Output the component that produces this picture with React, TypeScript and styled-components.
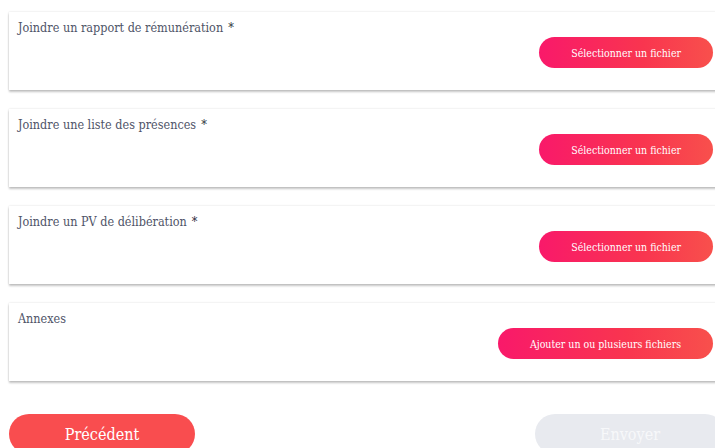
import React from "react"
import styled, { createGlobalStyle } from "styled-components"

const GlobalStyle = createGlobalStyle`
  html, body {
    margin: 0;
    padding: 0;
    background: #fff;
    overflow: hidden;
  }
  body {
    font-family: "DejaVu Serif Condensed", "DejaVu Serif", serif;
  }
`

const Page = styled.div`
  width: 730px;
  padding: 12px 0 0 9px;
  display: flex;
  flex-direction: column;
  gap: 19px;
`

const UploadCard = styled.div`
  box-sizing: border-box;
  width: 716px;
  height: 78px;
  padding: 7px 12px 0 9px;
  background: #fff;
  box-shadow: 0 2px 2px rgba(0, 0, 0, 0.22), 0 0 2px rgba(0, 0, 0, 0.14);
  display: flex;
  flex-direction: column;
`

const Label = styled.div`
  font-size: 12.5px;
  line-height: 18px;
  color: #4f5468;
  height: 18px;
`

const Required = styled.span`
  color: #2a2c3a;
  margin-left: 5px;
`

const PickButton = styled.button`
  align-self: flex-end;
  height: 31px;
  padding: 0 32px;
  border: none;
  border-radius: 16px;
  background: linear-gradient(90deg, #f9196a 0%, #f9354f 60%, #f8504c 100%);
  color: #fff;
  font-family: inherit;
  font-size: 10.5px;
  cursor: pointer;
`

const Footer = styled.div`
  margin-top: 14px;
  display: flex;
  justify-content: space-between;
  width: 716px;
`

const NavButton = styled.button<{ $disabled?: boolean }>`
  height: 40px;
  border: none;
  border-radius: 20px;
  font-family: inherit;
  font-size: 16px;
  background: ${(p) => (p.$disabled ? "#e8eaef" : "#f94d4f")};
  color: ${(p) => (p.$disabled ? "#f7f8fa" : "#fff")};
  width: ${(p) => (p.$disabled ? "190px" : "186px")};
  cursor: ${(p) => (p.$disabled ? "default" : "pointer")};
`

const fields = [
  { label: "Joindre un rapport de rémunération", required: true, action: "Sélectionner un fichier" },
  { label: "Joindre une liste des présences", required: true, action: "Sélectionner un fichier" },
  { label: "Joindre un PV de délibération", required: true, action: "Sélectionner un fichier" },
  { label: "Annexes", required: false, action: "Ajouter un ou plusieurs fichiers" },
]

const App = () => {
  return (
    <>
      <GlobalStyle />
      <Page>
        {fields.map((f) => (
          <UploadCard key={f.label}>
            <Label>
              {f.label}
              {f.required && <Required>*</Required>}
            </Label>
            <PickButton>{f.action}</PickButton>
          </UploadCard>
        ))}
        <Footer>
          <NavButton>Précédent</NavButton>
          <NavButton $disabled>Envoyer</NavButton>
        </Footer>
      </Page>
    </>
  )
}

export default App
